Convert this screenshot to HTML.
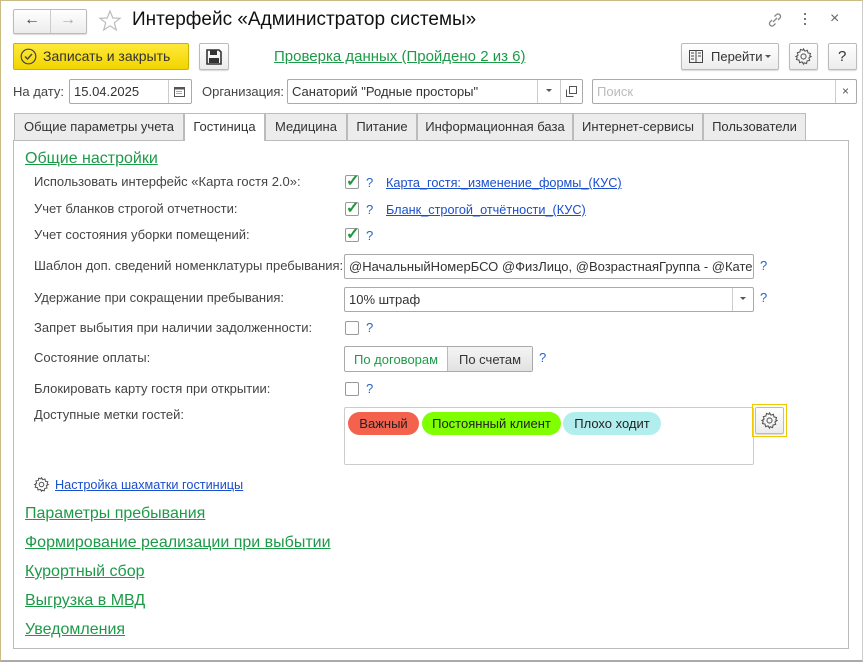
<!DOCTYPE html>
<html><head><meta charset="utf-8">
<style>
*{box-sizing:border-box;margin:0;padding:0}
body{width:863px;height:662px;background:#fff;font-family:"Liberation Sans",Arial,sans-serif;font-size:13px;color:#444;position:relative;overflow:hidden}
.abs{position:absolute}
.frame{left:0;top:0;width:863px;height:662px;border:1px solid #c9bd85;border-bottom:2px solid #aaa;border-right:1px solid #ccc}
.btn{position:absolute;border:1px solid #bbb;border-radius:2px;background:linear-gradient(#fff,#ececec);box-shadow:0 1px 1px rgba(0,0,0,.15)}
.field{position:absolute;border:1px solid #aaa;border-radius:2px;background:#fff;height:25px;line-height:23px;padding-left:4px;color:#333;font-size:13px;white-space:nowrap;overflow:hidden}
.lbl{position:absolute;left:34px;color:#444;font-size:13px;line-height:16px}
.cb{position:absolute;left:345px;width:14px;height:14px;border:1px solid #999;border-radius:2px;background:#fff}
.ck{position:absolute;left:346px;color:#1a9a3a;font-size:16px;font-weight:bold}
.q{position:absolute;color:#2266cc;font-size:13px;line-height:16px}
.lnk{position:absolute;color:#1a4fcc;text-decoration:underline;font-size:12.7px;line-height:16px}
.glnk{position:absolute;left:25px;color:#1d9a48;text-decoration:underline;font-size:16px;line-height:18px}
.tab{position:absolute;top:113px;height:27px;border:1px solid #bbb;border-bottom:none;background:#ececec;line-height:26px;text-align:center;font-size:13px;color:#333}
.tag{position:absolute;top:412px;height:23px;line-height:23px;border-radius:12px;text-align:center;font-size:13px;color:#222}
</style></head><body>
<div class="abs frame"></div>

<div class="btn" style="left:13px;top:9px;width:74px;height:25px"></div>
<div class="abs" style="left:50px;top:10px;width:1px;height:23px;background:#ccc"></div>
<div class="abs" style="left:24px;top:11px;font-size:16px;color:#444;font-weight:bold">&#8592;</div>
<div class="abs" style="left:60px;top:11px;font-size:16px;color:#aaa;font-weight:bold">&#8594;</div>
<svg class="abs" style="left:98px;top:9px" width="24" height="24" viewBox="0 0 24 24"><polygon points="12,2 14.8,9 22,9.3 16.3,13.8 18.3,21 12,16.8 5.7,21 7.7,13.8 2,9.3 9.2,9" fill="none" stroke="#bbb" stroke-width="1.2"/></svg>
<div class="abs" style="left:132px;top:9px;font-size:19px;color:#111">Интерфейс «Администратор системы»</div>
<svg class="abs" style="left:766px;top:11px" width="18" height="18" viewBox="0 0 18 18"><path d="M7 11l4-4M6 9l-2 2a2.5 2.5 0 0 0 3.5 3.5l2-2M12 9l2-2a2.5 2.5 0 0 0-3.5-3.5l-2 2" fill="none" stroke="#888" stroke-width="1.3"/></svg>
<div class="abs" style="left:804px;top:13px;width:2px;height:2px;background:#777;box-shadow:0 5px 0 #777,0 10px 0 #777"></div>
<div class="abs" style="left:830px;top:10px;font-size:16px;color:#666">×</div>

<div class="abs" style="left:13px;top:43px;width:176px;height:27px;border:1px solid #c9b200;border-radius:2px;background:linear-gradient(#ffe93a,#f2d400)"></div>
<svg class="abs" style="left:20px;top:48px" width="17" height="17" viewBox="0 0 17 17"><circle cx="8.5" cy="8.5" r="7.3" fill="none" stroke="#444" stroke-width="1.2"/><path d="M5 8.5l2.5 2.5 4.5-5" fill="none" stroke="#444" stroke-width="1.4"/></svg>
<div class="abs" style="left:43px;top:48px;font-size:14px;color:#333">Записать и закрыть</div>
<div class="btn" style="left:199px;top:43px;width:30px;height:27px"></div>
<svg class="abs" style="left:205px;top:48px" width="18" height="18" viewBox="0 0 18 18"><path d="M2 2h12l2 2v12H2z" fill="none" stroke="#333" stroke-width="1.6"/><rect x="5" y="2" width="7" height="5" fill="#333"/><rect x="4" y="10" width="10" height="5" fill="#333"/></svg>
<div class="abs" style="left:274px;top:48px;font-size:15px;color:#1d9a48;text-decoration:underline">Проверка данных (Пройдено 2 из 6)</div>
<div class="btn" style="left:681px;top:43px;width:98px;height:27px"></div>
<svg class="abs" style="left:689px;top:50px" width="14" height="13" viewBox="0 0 14 13"><rect x="0.5" y="0.5" width="13" height="12" fill="none" stroke="#444"/><path d="M7 0v13M2 3h3M2 6h3M2 9h3M9 3h3M9 6h3" stroke="#444"/></svg>
<div class="abs" style="left:711px;top:49px;font-size:13px;color:#333">Перейти</div>
<div class="abs" style="left:765px;top:55px;border:3px solid transparent;border-top:3px solid #555"></div>
<div class="btn" style="left:789px;top:43px;width:29px;height:27px"></div>
<svg class="abs" style="left:794px;top:47px" width="19" height="19" viewBox="0 0 20 20"><path d="M10 2l1.5 2.3 2.6-.8.6 2.7 2.7.6-.8 2.6L18 10l-2.3 1.5.8 2.6-2.7.6-.6 2.7-2.6-.8L10 18l-1.5-2.3-2.6.8-.6-2.7-2.7-.6.8-2.6L2 10l2.3-1.5-.8-2.6 2.7-.6.6-2.7 2.6.8z" fill="none" stroke="#555" stroke-width="1.1"/><circle cx="10" cy="10" r="2.7" fill="none" stroke="#555" stroke-width="1.1"/></svg>
<div class="btn" style="left:828px;top:43px;width:29px;height:27px"></div>
<div class="abs" style="left:838px;top:48px;font-size:15px;color:#333">?</div>

<div class="abs" style="left:13px;top:84px;color:#444">На дату:</div>
<div class="field" style="left:69px;top:79px;width:123px">15.04.2025</div>
<div class="abs" style="left:168px;top:80px;width:1px;height:23px;background:#ccc"></div>
<svg class="abs" style="left:174px;top:86px" width="11" height="11" viewBox="0 0 11 11"><rect x="0.5" y="1.5" width="10" height="9" fill="none" stroke="#555"/><rect x="0.5" y="1.5" width="10" height="2" fill="#555"/><path d="M2.5 5.5h6M2.5 7.5h6" stroke="#555" stroke-dasharray="1 1"/></svg>
<div class="abs" style="left:202px;top:84px;color:#444">Организация:</div>
<div class="field" style="left:287px;top:79px;width:296px">Санаторий "Родные просторы"</div>
<div class="abs" style="left:537px;top:80px;width:1px;height:23px;background:#ccc"></div>
<div class="abs" style="left:560px;top:80px;width:1px;height:23px;background:#ccc"></div>
<div class="abs" style="left:546px;top:89px;border:3px solid transparent;border-top:3px solid #555"></div>
<svg class="abs" style="left:566px;top:86px" width="11" height="11" viewBox="0 0 11 11"><rect x="3.5" y="0.5" width="7" height="7" fill="none" stroke="#555"/><path d="M0.5 3.5v7h7" fill="none" stroke="#555"/></svg>
<div class="field" style="left:592px;top:79px;width:265px;color:#bbb">Поиск</div>
<div class="abs" style="left:835px;top:80px;width:1px;height:23px;background:#ccc"></div>
<div class="abs" style="left:842px;top:84px;font-size:12px;color:#555">×</div>

<div class="abs" style="left:13px;top:140px;width:836px;height:509px;border:1px solid #bbb;background:#fff"></div>
<div class="tab" style="left:14px;width:170px">Общие параметры учета</div>
<div class="tab" style="left:184px;width:81px;background:#fff;height:28px">Гостиница</div>
<div class="tab" style="left:265px;width:82px">Медицина</div>
<div class="tab" style="left:347px;width:70px">Питание</div>
<div class="tab" style="left:417px;width:156px">Информационная база</div>
<div class="tab" style="left:573px;width:130px">Интернет-сервисы</div>
<div class="tab" style="left:703px;width:103px">Пользователи</div>

<div class="abs" style="left:25px;top:150px;font-size:16px;color:#1d9a48;text-decoration:underline">Общие настройки</div>

<div class="lbl" style="top:174px">Использовать интерфейс «Карта гостя 2.0»:</div>
<div class="lbl" style="top:201px">Учет бланков строгой отчетности:</div>
<div class="lbl" style="top:227px">Учет состояния уборки помещений:</div>
<div class="lbl" style="top:258px">Шаблон доп. сведений номенклатуры пребывания:</div>
<div class="lbl" style="top:290px">Удержание при сокращении пребывания:</div>
<div class="lbl" style="top:320px">Запрет выбытия при наличии задолженности:</div>
<div class="lbl" style="top:350px">Состояние оплаты:</div>
<div class="lbl" style="top:381px">Блокировать карту гостя при открытии:</div>
<div class="lbl" style="top:407px">Доступные метки гостей:</div>

<div class="cb" style="top:175px"></div><div class="ck" style="top:171px">✓</div>
<div class="cb" style="top:202px"></div><div class="ck" style="top:198px">✓</div>
<div class="cb" style="top:228px"></div><div class="ck" style="top:224px">✓</div>
<div class="q" style="left:366px;top:175px">?</div>
<div class="q" style="left:366px;top:202px">?</div>
<div class="q" style="left:366px;top:228px">?</div>
<div class="lnk" style="left:386px;top:175px">Карта_гостя:_изменение_формы_(КУС)</div>
<div class="lnk" style="left:386px;top:202px">Бланк_строгой_отчётности_(КУС)</div>

<div class="field" style="left:344px;top:254px;width:410px;height:25px;line-height:23px">@НачальныйНомерБСО @ФизЛицо, @ВозрастнаяГруппа - @Категория</div>
<div class="q" style="left:760px;top:258px">?</div>
<div class="field" style="left:344px;top:287px;width:410px;height:25px">10% штраф</div>
<div class="abs" style="left:732px;top:288px;width:1px;height:23px;background:#ccc"></div>
<div class="abs" style="left:740px;top:297px;border:3px solid transparent;border-top:3px solid #555"></div>
<div class="q" style="left:760px;top:290px">?</div>

<div class="cb" style="top:321px"></div><div class="q" style="left:366px;top:320px">?</div>

<div class="abs" style="left:344px;top:346px;width:189px;height:26px;border:1px solid #aaa;border-radius:2px;background:#fff"></div>
<div class="abs" style="left:447px;top:347px;width:85px;height:24px;background:linear-gradient(#f4f4f4,#e2e2e2);border-left:1px solid #bbb"></div>
<div class="abs" style="left:354px;top:352px;color:#1d9a48">По договорам</div>
<div class="abs" style="left:459px;top:352px;color:#333">По счетам</div>
<div class="q" style="left:539px;top:350px">?</div>

<div class="cb" style="top:382px"></div><div class="q" style="left:366px;top:381px">?</div>

<div class="abs" style="left:344px;top:407px;width:410px;height:58px;border:1px solid #ccc;border-radius:2px"></div>
<div class="tag" style="left:348px;width:71px;background:#f4614c">Важный</div>
<div class="tag" style="left:422px;width:139px;background:#80ff00">Постоянный клиент</div>
<div class="tag" style="left:563px;width:98px;background:#b2eeee">Плохо ходит</div>
<div class="abs" style="left:752px;top:404px;width:35px;height:33px;border:1px solid #f0c800"></div>
<div class="btn" style="left:755px;top:407px;width:29px;height:27px"></div>
<svg class="abs" style="left:760px;top:411px" width="19" height="19" viewBox="0 0 20 20"><path d="M10 2l1.5 2.3 2.6-.8.6 2.7 2.7.6-.8 2.6L18 10l-2.3 1.5.8 2.6-2.7.6-.6 2.7-2.6-.8L10 18l-1.5-2.3-2.6.8-.6-2.7-2.7-.6.8-2.6L2 10l2.3-1.5-.8-2.6 2.7-.6.6-2.7 2.6.8z" fill="none" stroke="#555" stroke-width="1.1"/><circle cx="10" cy="10" r="2.7" fill="none" stroke="#555" stroke-width="1.1"/></svg>

<svg class="abs" style="left:33px;top:476px" width="17" height="17" viewBox="0 0 20 20"><path d="M10 2l1.5 2.3 2.6-.8.6 2.7 2.7.6-.8 2.6L18 10l-2.3 1.5.8 2.6-2.7.6-.6 2.7-2.6-.8L10 18l-1.5-2.3-2.6.8-.6-2.7-2.7-.6.8-2.6L2 10l2.3-1.5-.8-2.6 2.7-.6.6-2.7 2.6.8z" fill="none" stroke="#555" stroke-width="1.2"/><circle cx="10" cy="10" r="2.7" fill="none" stroke="#555" stroke-width="1.2"/></svg>
<div class="lnk" style="left:55px;top:477px">Настройка шахматки гостиницы</div>

<div class="glnk" style="top:505px">Параметры пребывания</div>
<div class="glnk" style="top:534px">Формирование реализации при выбытии</div>
<div class="glnk" style="top:563px">Курортный сбор</div>
<div class="glnk" style="top:592px">Выгрузка в МВД</div>
<div class="glnk" style="top:621px">Уведомления</div>
</body></html>
